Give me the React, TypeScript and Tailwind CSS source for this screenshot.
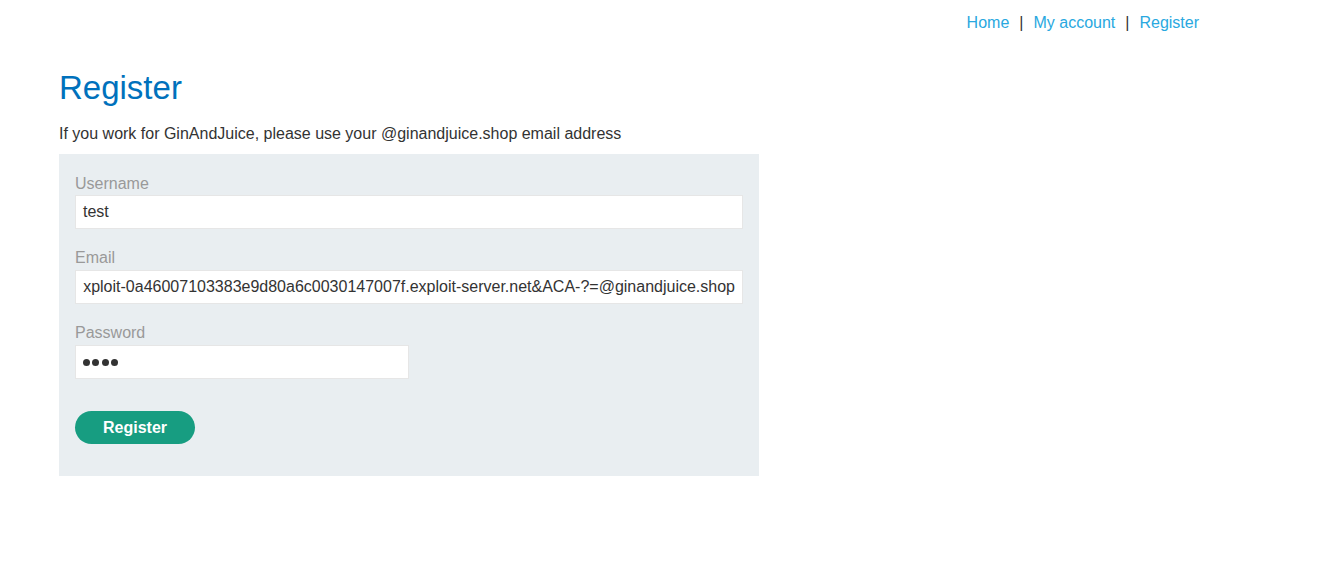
import React from "react";

export default function App() {
  const font = { fontFamily: '"Liberation Sans", Arial, sans-serif' };
  return (
    <div className="min-h-[574px] w-full bg-white text-[16px] text-[#333333]" style={font}>
      <div className="flex justify-end pr-[119px] pt-[13px] leading-[20px]">
        <a className="text-[#29a8e0]">Home</a>
        <span className="mx-[10px] text-[#333333]">|</span>
        <a className="text-[#29a8e0]">My account</a>
        <span className="mx-[10px] text-[#333333]">|</span>
        <a className="text-[#29a8e0]">Register</a>
      </div>
      <div className="px-[59px]">
        <h1 className="mt-[35px] text-[33px] leading-[40px] text-[#0071bc]">Register</h1>
        <p className="mt-[15px] leading-[22px]">
          If you work for GinAndJuice, please use your @ginandjuice.shop email address
        </p>
        <div className="mt-[9px] flex w-[700px] flex-col bg-[#e9eef1] px-[16px] pt-[19px] pb-[32px]">
          <label className="leading-[22px] text-[#999999]">Username</label>
          <div className="flex h-[34px] items-center border border-[#e6e6e6] bg-white px-[7px]">
            test
          </div>
          <label className="mt-[18px] leading-[22px] text-[#999999]">Email</label>
          <div className="mt-[1px] flex h-[34px] items-center border border-[#e6e6e6] bg-white px-[7px]">
            <div className="flex min-w-0 flex-1 justify-end overflow-hidden whitespace-nowrap">
              <span className="shrink-0">exploit-0a46007103383e9d80a6c0030147007f.exploit-server.net&amp;ACA-?=@ginandjuice.shop</span>
            </div>
          </div>
          <label className="mt-[18px] leading-[22px] text-[#999999]">Password</label>
          <div
            className="mt-[1px] flex h-[34px] w-[334px] items-center gap-[2.3px] border border-[#e6e6e6] bg-white px-[7px]"
            aria-label="password"
          >
            <span className="h-[7px] w-[7px] rounded-full bg-[#333333]" />
            <span className="h-[7px] w-[7px] rounded-full bg-[#333333]" />
            <span className="h-[7px] w-[7px] rounded-full bg-[#333333]" />
            <span className="h-[7px] w-[7px] rounded-full bg-[#333333]" />
          </div>
          <button className="mt-[32px] h-[33px] w-[120px] rounded-full bg-[#179d81] font-bold text-white">
            Register
          </button>
        </div>
      </div>
    </div>
  );
}
